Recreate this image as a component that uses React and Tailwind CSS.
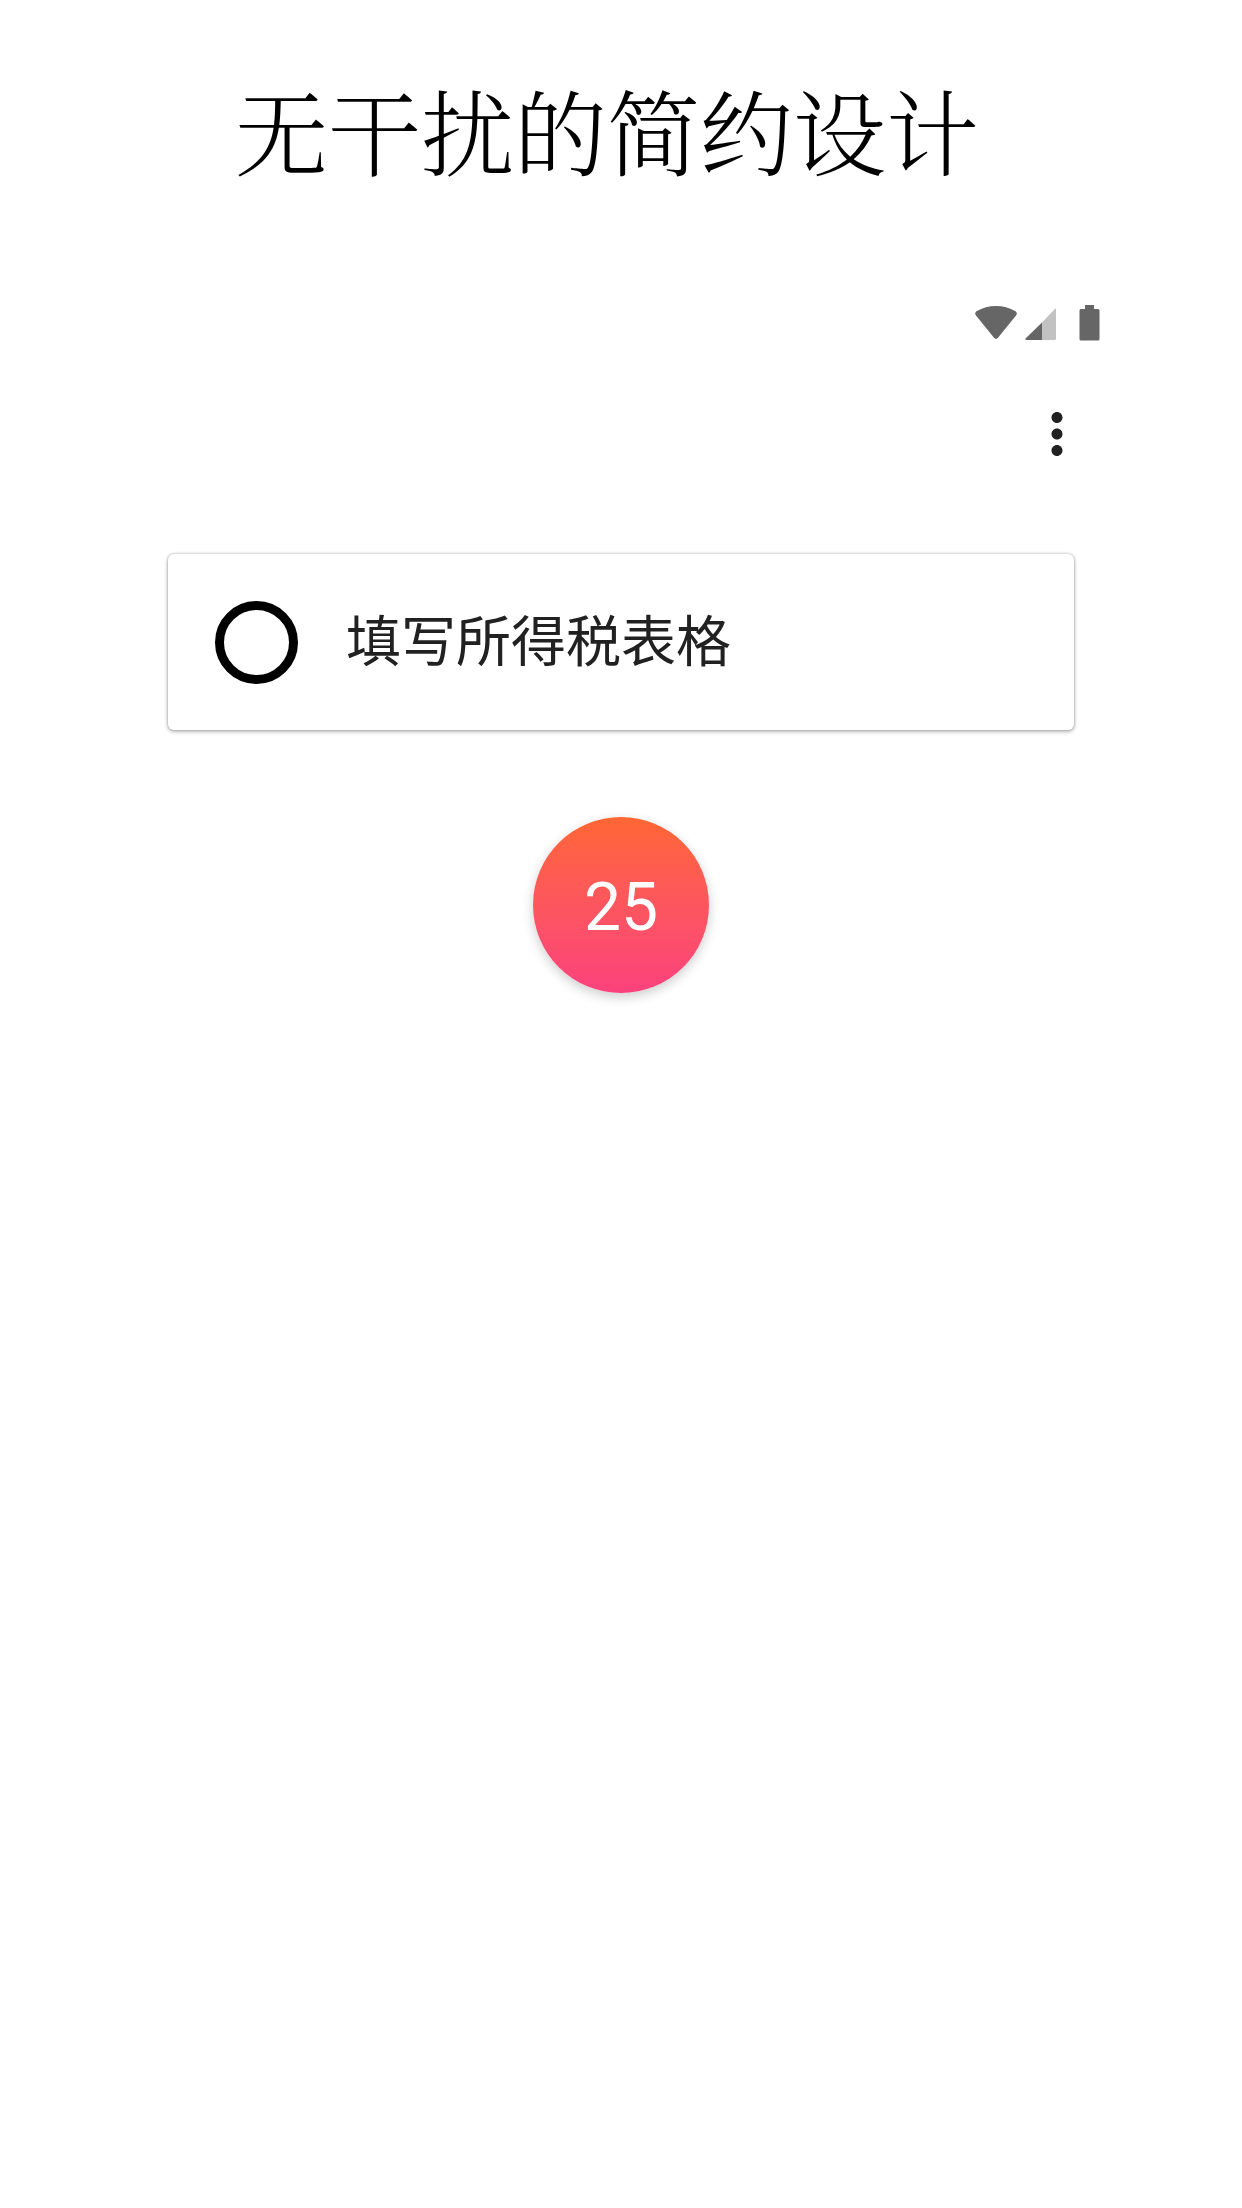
import { useState } from 'react';
import { MdMoreVert } from 'react-icons/md';

function StatusBar() {
  return (
    <div className="flex justify-end items-center mt-[122px] pr-[142px] text-[#666666]">
      <svg viewBox="0 0 42 36" className="w-[42px] h-9" fill="currentColor">
        <path d="M1 10.5C-.2 9 0 7.2 1.6 6.2 13-.8 29-.8 40.4 6.2 42 7.200 42.200 9 41 10.500L23 32.800Q21 35 19 32.800Z" />
      </svg>
      <svg viewBox="0 0 32 36" className="w-8 h-9 ml-2" fill="currentColor">
        <path d="M17 17.500V35H1.500Q-.5 34.800.8 33.300Z" />
        <path d="M17 17.500L29.800 4Q31 3 31 4.500V33.500Q31 35 29.500 35H17Z" fill="#c2c2c2" />
      </svg>
      <svg viewBox="0 0 21 36" className="w-[21px] h-9 ml-[22px]" fill="currentColor">
        <path d="M6 0H15V4H19Q20.500 4 20.500 5.500V34Q20.500 35.500 19 35.500H2Q.5 35.500.5 34V5.500Q.5 4 2 4H6Z" />
      </svg>
    </div>
  );
}

function TaskCard({ title }) {
  const [done, setDone] = useState(false);

  return (
    <label className="flex items-center h-44 mx-[168px] px-[47px] gap-12 rounded-md bg-white shadow-[0_0_3px_rgba(0,0,0,0.32),0_2px_4px_rgba(0,0,0,0.24)] cursor-pointer">
      <input
        type="checkbox"
        checked={done}
        onChange={(e) => setDone(e.target.checked)}
        className="appearance-none shrink-0 size-[83px] rounded-full border-[9px] border-black checked:bg-black"
      />
      <span className="text-[55px] leading-[80px] text-[#212121]">{title}</span>
    </label>
  );
}

export default function App() {
  return (
    <div className="min-h-screen bg-white pt-[75px] pb-20 font-['Roboto','Noto_Sans_CJK_SC',sans-serif]">
      <h1
        lang="zh-CN"
        className="pr-7 text-center text-[93px] leading-[108px] font-light text-black font-['Noto_Serif_CJK_SC','Noto_Sans_CJK_SC',serif]"
      >
        无干扰的简约设计
      </h1>

      <StatusBar />

      <div className="flex justify-end mt-[60px] pr-[152px]">
        <button type="button" aria-label="菜单" className="text-[#212121]">
          <MdMoreVert className="size-[66px]" />
        </button>
      </div>

      <main lang="zh-CN" className="mt-[87px]">
        <TaskCard title="填写所得税表格" />
        <div className="flex justify-center mt-[87px]">
          <button
            type="button"
            className="size-44 pt-1 rounded-full bg-linear-to-b from-[#ff6632] to-[#fb417c] text-white text-[66px] shadow-[0_4px_12px_rgba(0,0,0,0.2)]"
          >
            25
          </button>
        </div>
      </main>
    </div>
  );
}
